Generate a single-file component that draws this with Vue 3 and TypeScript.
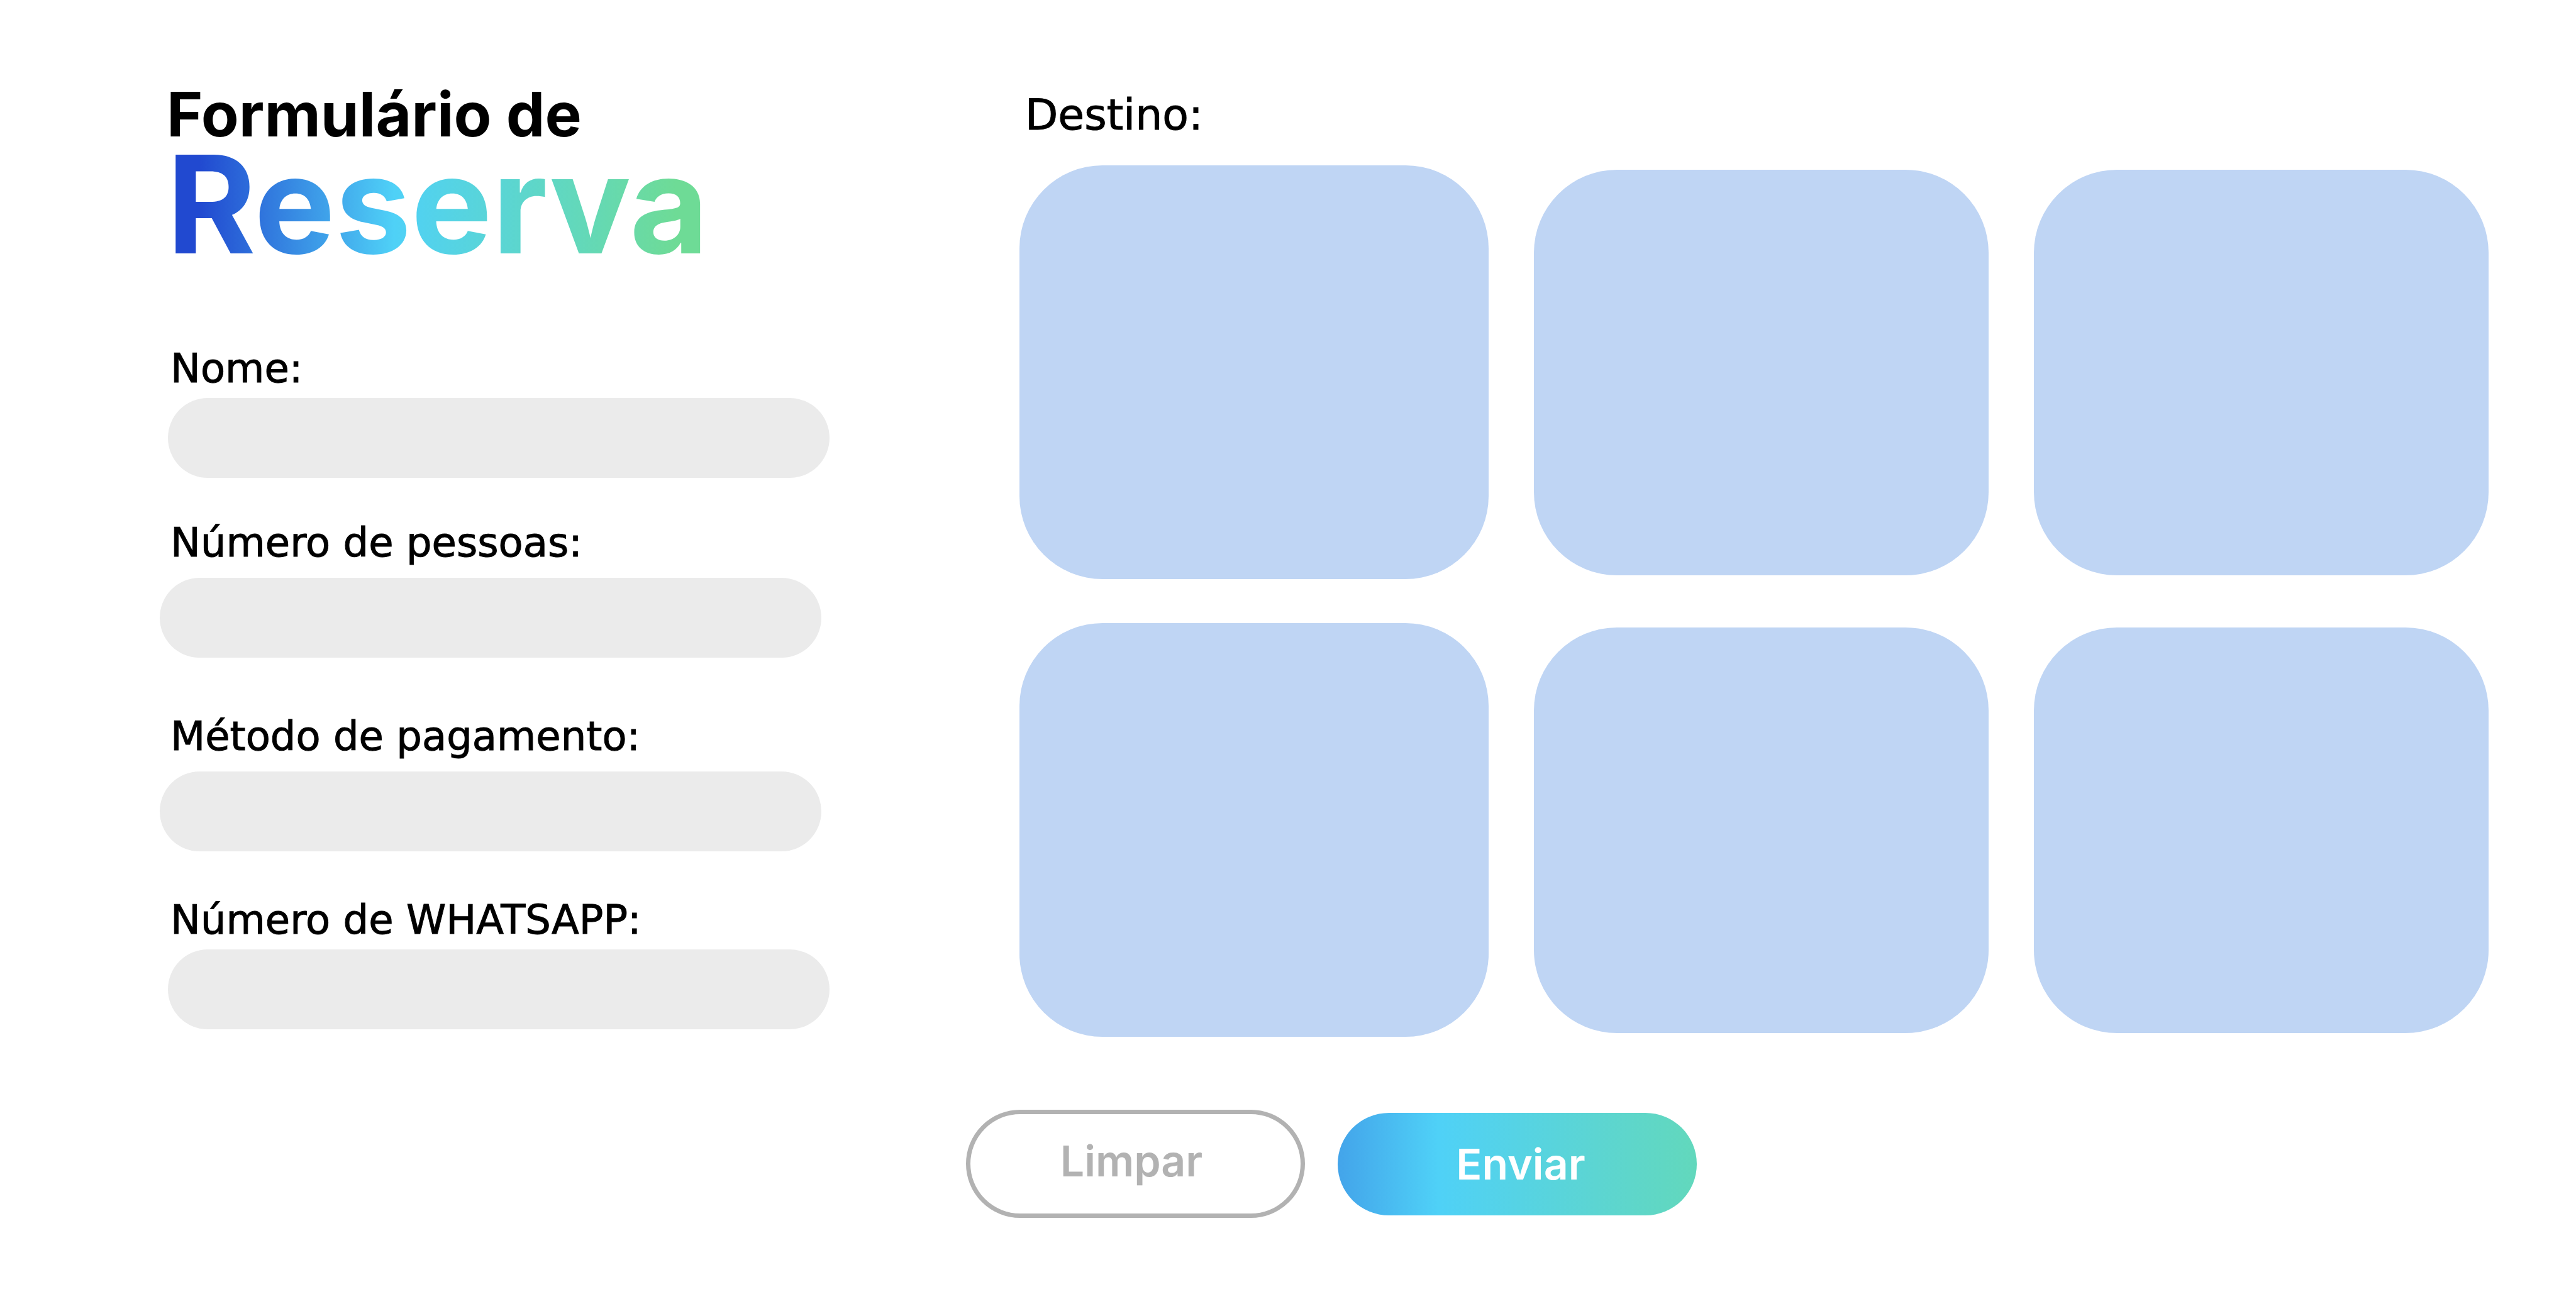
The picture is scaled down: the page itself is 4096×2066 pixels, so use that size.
<script setup lang="ts">
import { reactive, ref } from 'vue'

type FieldKey = 'nome' | 'pessoas' | 'pagamento' | 'whatsapp'

interface Field {
  key: FieldKey
  label: string
  type: string
}

const fields: Field[] = [
  { key: 'nome', label: 'Nome:', type: 'text' },
  { key: 'pessoas', label: 'Número de pessoas:', type: 'text' },
  { key: 'pagamento', label: 'Método de pagamento:', type: 'text' },
  { key: 'whatsapp', label: 'Número de WHATSAPP:', type: 'tel' },
]

const destinations: number[] = [1, 2, 3, 4, 5, 6]

const values = reactive<Record<FieldKey, string>>({
  nome: '',
  pessoas: '',
  pagamento: '',
  whatsapp: '',
})
const destination = ref<number | null>(null)

function clear(): void {
  for (const field of fields) values[field.key] = ''
  destination.value = null
}
</script>

<template>
  <form class="page" @submit.prevent @reset.prevent="clear">
    <div class="columns">
      <section class="details">
        <h1 class="title">
          <span class="title-lead">Formulário de</span>
          <span class="title-main">Reserva</span>
        </h1>
        <div v-for="field in fields" :key="field.key" class="field" :class="field.key">
          <label class="label" :for="field.key">{{ field.label }}</label>
          <input :id="field.key" v-model="values[field.key]" class="input" :type="field.type" />
        </div>
      </section>

      <section class="destinations" role="radiogroup" aria-labelledby="destino">
        <h2 id="destino" class="heading">Destino:</h2>
        <div class="cards">
          <input
            v-for="n in destinations"
            :key="n"
            v-model="destination"
            class="card"
            type="radio"
            name="destino"
            :value="n"
            :aria-label="`Destino ${n}`"
          />
        </div>
      </section>
    </div>

    <div class="actions">
      <button class="button clear" type="reset">Limpar</button>
      <button class="button send" type="submit">Enviar</button>
    </div>
  </form>
</template>

<style>
body {
  margin: 0;
  background: #ffffff;
}
</style>

<style scoped>
.page {
  box-sizing: border-box;
  padding: 139px 139px 128px 254px;
  color: #000000;
  font-family: 'DejaVu Sans', sans-serif;
}

.columns {
  display: grid;
  grid-template-columns: 1066fr 2336fr;
  column-gap: 301px;
  align-items: start;
}

.title {
  margin: 0 0 125px;
  padding-left: 11px;
  font-family: Inter, sans-serif;
  font-weight: 700;
}

.title-lead {
  display: block;
  font-size: 98px;
  line-height: 86px;
}

.title-main {
  display: block;
  width: fit-content;
  font-size: 216px;
  line-height: 200px;
  color: transparent;
  background: linear-gradient(90deg, #2149d0 6%, #4fd1f7 42%, #62d8bc 75%, #6edb96 94%);
  background-clip: text;
  -webkit-background-clip: text;
}

.field {
  display: flex;
  flex-direction: column;
  gap: 20px;
}

.field.nome,
.field.whatsapp {
  gap: 11px;
}

.field.pessoas {
  margin-top: 67px;
}

.field.pagamento {
  margin-top: 89px;
}

.field.whatsapp {
  margin-top: 73px;
}

.label {
  padding-left: 17px;
  font-size: 64px;
  line-height: 72px;
  -webkit-text-stroke: 1px currentColor;
}

.input {
  box-sizing: border-box;
  width: calc(100% - 14px);
  height: 127px;
  padding: 0 56px;
  border: 0;
  border-radius: 64px;
  background: #ebebeb;
  font: inherit;
  font-size: 64px;
}

.field.nome .input,
.field.whatsapp .input {
  margin-left: 13px;
}

.destinations {
  padding-top: 4px;
}

.heading {
  margin: 0 0 40px;
  padding-left: 9px;
  font-size: 68px;
  font-weight: 400;
  line-height: 80px;
  -webkit-text-stroke: 1px currentColor;
}

.cards {
  display: grid;
  grid-template-columns: 746fr 723fr 723fr;
  gap: 70px 72px;
  align-items: center;
}

.card {
  appearance: none;
  width: 100%;
  margin: 0;
  aspect-ratio: 723 / 645;
  border-radius: 132px;
  background: #bfd5f4;
  cursor: pointer;
}

.card:nth-child(3n + 1) {
  aspect-ratio: 746 / 658;
}

.card:checked {
  background: #8fb5ec;
}

.actions {
  display: flex;
  justify-content: center;
  align-items: center;
  gap: 52px;
  margin-top: 116px;
  padding-left: 22px;
}

.button {
  box-sizing: border-box;
  border: 0;
  border-radius: 86px;
  font-family: Inter, sans-serif;
  font-size: 68px;
  font-weight: 600;
  line-height: 80px;
  cursor: pointer;
}

.clear {
  width: 539px;
  height: 172px;
  padding: 0 12px 10px 0;
  border: 7px solid #b2b2b2;
  background: #ffffff;
  color: #b2b2b2;
}

.send {
  width: 571px;
  height: 163px;
  padding: 0 0 0 12px;
  background: linear-gradient(90deg, #43a4ea 0%, #4fd1f7 28%, #5cd5d2 72%, #62d8bc 100%);
  color: #ffffff;
}
</style>
